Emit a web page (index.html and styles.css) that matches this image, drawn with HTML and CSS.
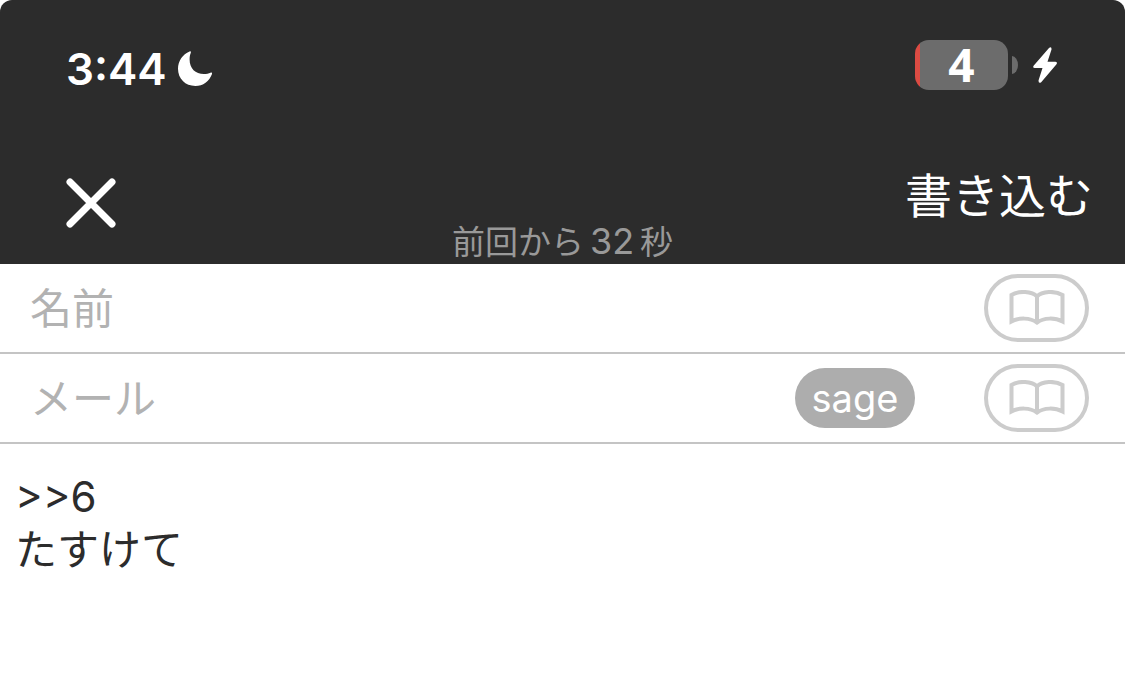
FILE: index.html
```html
<!DOCTYPE html>
<html lang="ja">
<head>
    <meta charset="UTF-8">
    <meta name="viewport" content="width=device-width, initial-scale=1.0">
    <title>書き込み</title>
    <link rel="stylesheet" href="styles.css">
</head>
<body>
    <form id="postForm" class="post-form">
        <header class="header">
            <!-- ステータスバー -->
            <div class="status-bar">
                <div class="status-time">
                    <span>3:44</span>
                    <svg class="moon" viewBox="0 0 36 36" aria-hidden="true">
                        <path d="M12.6.4C13.6.1 14.2.8 13.8 1.8C12.900 4 12.600 6 12.600 8.500C12.600 17.500 18.400 23 27 23C29.500 23 31.700 22.600 33.500 21.700C34.600 21.200 35.400 22 35 23C32.400 30.300 26 35 18.400 35C8.300 35 1 27.800 1 17.800C1 10 5.600 3.100 12.600.4Z"/>
                    </svg>
                </div>
                <div class="status-power">
                    <span class="battery">4</span>
                    <span class="battery-tip"></span>
                    <svg class="bolt" viewBox="0 0 24 36" aria-hidden="true">
                        <path d="M16 1L.8 18.500Q-.8 21 1.800 21H9.500L5.500 33.500Q5.500 37 8.200 35.300L23.300 17.500Q25 15 22.200 14.800H14.500L18.500 2.500Q18.700-.8 16 1Z"/>
                    </svg>
                </div>
            </div>

            <!-- ナビゲーション -->
            <div class="nav">
                <button type="button" class="close-button" aria-label="閉じる">
                    <svg viewBox="0 0 50 50" aria-hidden="true">
                        <path d="M4 4L46 46M46 4L4 46"/>
                    </svg>
                </button>
                <p class="elapsed">前回から<span class="elapsed-number">32</span>秒</p>
                <button type="submit" class="submit-button">書き込む</button>
            </div>
        </header>

        <!-- 名前 -->
        <div class="field">
            <input type="text" id="nameInput" placeholder="名前" aria-label="名前">
            <button type="button" class="book-button" aria-label="名前の履歴">
                <svg viewBox="0 0 56 36" aria-hidden="true">
                    <path d="M28 6.500C23 1 10 .5 2.500 5V31.500C10 27.500 21 27.500 28 32.500C35 27.500 46 27.500 53.500 31.500V5C46 .5 33 1 28 6.500ZM28 6.500V32.500"/>
                </svg>
            </button>
        </div>

        <!-- メール -->
        <div class="field">
            <input type="text" id="mailInput" placeholder="メール" aria-label="メール">
            <button type="button" class="sage-button">sage</button>
            <button type="button" class="book-button" aria-label="メールの履歴">
                <svg viewBox="0 0 56 36" aria-hidden="true">
                    <path d="M28 6.500C23 1 10 .5 2.500 5V31.500C10 27.500 21 27.500 28 32.500C35 27.500 46 27.500 53.500 31.500V5C46 .5 33 1 28 6.500ZM28 6.500V32.500"/>
                </svg>
            </button>
        </div>

        <!-- 本文 -->
        <textarea id="messageInput" class="message" aria-label="本文">&gt;&gt;6
たすけて</textarea>
    </form>
</body>
</html>
```
FILE: styles.css
```css
* {
    box-sizing: border-box;
}

body {
    margin: 0;
    background-color: #fff;
    font-family: Inter, "Noto Sans CJK JP", sans-serif;
}

button,
input,
textarea {
    margin: 0;
    padding: 0;
    border: none;
    outline: none;
    background: none;
    font-family: inherit;
}

svg {
    display: block;
}

.post-form {
    display: flex;
    flex-direction: column;
    min-height: 100vh;
}

.header {
    padding-top: 40px;
    background-color: #2c2c2c;
    border-radius: 12px 12px 0 0;
    color: #fff;
}

/* ステータスバー */
.status-bar {
    display: flex;
    justify-content: space-between;
    padding: 0 68px 0 66px;
}

.status-time {
    display: flex;
    align-items: center;
    gap: 10px;
    height: 58px;
    font-size: 44px;
    font-weight: 600;
}

.moon {
    width: 36px;
    height: 36px;
    fill: #fff;
}

.status-power {
    display: flex;
    align-items: center;
    height: 50px;
}

.battery {
    width: 93px;
    height: 50px;
    border-radius: 14px;
    background: linear-gradient(to right, #dc4b43 5px, #6c6c6c 5px);
    font-family: "Noto Sans", sans-serif;
    font-size: 46px;
    font-weight: 700;
    line-height: 48px;
    text-align: center;
}

.battery-tip {
    width: 6px;
    height: 18px;
    margin-left: 4px;
    border-radius: 0 6px 6px 0 / 0 9px 9px 0;
    background-color: #6c6c6c;
}

.bolt {
    width: 24px;
    height: 36px;
    margin-left: 15px;
    fill: #fff;
}

/* ナビゲーション */
.nav {
    display: grid;
    grid-template-columns: 1fr auto 1fr;
    height: 166px;
    padding: 0 32px;
}

.close-button {
    align-self: start;
    justify-self: start;
    width: 50px;
    height: 50px;
    margin: 80px 0 0 34px;
}

.close-button svg {
    width: 50px;
    height: 50px;
    fill: none;
    stroke: #fff;
    stroke-width: 7;
    stroke-linecap: round;
}

.elapsed {
    align-self: end;
    margin: 0;
    color: #999;
    font-size: 33px;
    line-height: 44px;
}

.elapsed-number {
    margin: 0 6px;
    font-size: 36px;
}

.submit-button {
    align-self: start;
    justify-self: end;
    margin-top: 68px;
    color: #fff;
    font-size: 47px;
    line-height: 60px;
}

/* 入力欄 */
.field {
    display: flex;
    align-items: center;
    height: 90px;
    padding: 0 36px 0 30px;
    border-bottom: 2px solid #c4c4c4;
}

.field input {
    flex: 1;
    min-width: 0;
    height: 60px;
    color: #2c2c2c;
    font-size: 42px;
}

.field input::placeholder {
    color: #b2b2b2;
    opacity: 1;
}

.book-button {
    display: flex;
    align-items: center;
    justify-content: center;
    width: 105px;
    height: 68px;
    border: 4px solid #ccc;
    border-radius: 34px;
}

.book-button svg {
    width: 56px;
    height: 36px;
    fill: none;
    stroke: #ccc;
    stroke-width: 4;
}

.sage-button {
    width: 120px;
    height: 60px;
    margin-right: 69px;
    border-radius: 30px;
    background-color: #adadad;
    color: #fff;
    font-size: 38px;
    line-height: 60px;
}

.message {
    flex: 1;
    width: 100%;
    padding: 26px 15px;
    color: #2c2c2c;
    font-size: 42px;
    line-height: 53px;
    resize: none;
}
```
